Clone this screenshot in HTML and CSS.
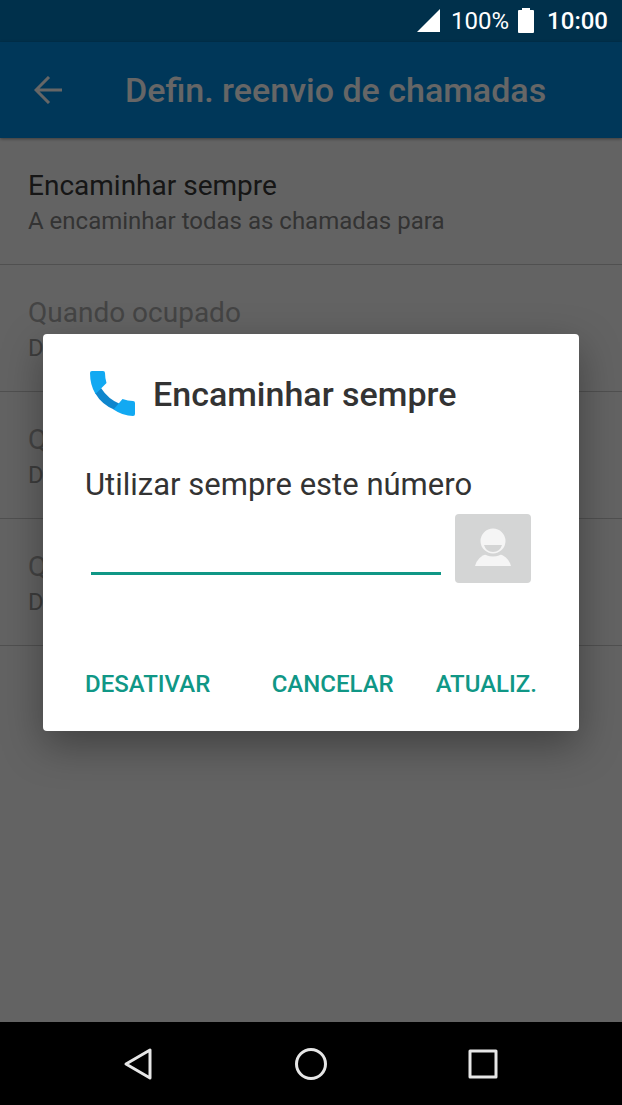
FILE: index.html
```html
<!DOCTYPE html>
<html lang="pt">
<head>
  <meta charset="UTF-8">
  <title>Defin. reenvio de chamadas</title>
  <meta name="viewport" content="width=device-width, initial-scale=1.0">
  <link rel="stylesheet" href="styles.css">
</head>
<body>

  <div class="status-bar">
    <svg width="24" height="24" viewBox="0 0 24 24" fill="#fff" aria-hidden="true">
      <path d="M0 23L23 0V23Z"/>
    </svg>
    <span class="battery-level">100%</span>
    <svg class="battery" width="18" height="26" viewBox="0 0 18 26" fill="#fff" aria-hidden="true">
      <path d="M5 0H13V2H16Q17 2 17 3V24Q17 25 16 25H2Q1 25 1 24V3Q1 2 2 2H5Z"/>
    </svg>
    <span class="clock">10:00</span>
  </div>

  <main class="screen">
    <header class="app-bar">
      <button type="button" class="back" aria-label="Voltar">
        <svg width="28" height="28" viewBox="0 0 28 28" fill="none" stroke="#fff" stroke-width="3" aria-hidden="true">
          <path d="M28 14H3M15 1L2 14L15 27"/>
        </svg>
      </button>
      <h1>Defin. reenvio de chamadas</h1>
    </header>

    <ul class="settings">
      <li class="setting">
        <h2>Encaminhar sempre</h2>
        <p>A encaminhar todas as chamadas para</p>
      </li>
      <li class="setting disabled">
        <h2>Quando ocupado</h2>
        <p>D</p>
      </li>
      <li class="setting disabled">
        <h2>Q</h2>
        <p>D</p>
      </li>
      <li class="setting disabled">
        <h2>Q</h2>
        <p>D</p>
      </li>
    </ul>

    <div class="overlay">
      <form class="dialog" role="dialog" aria-labelledby="dialogTitle">
        <div class="dialog-header">
          <svg width="46" height="46" viewBox="0 0 46 46" aria-hidden="true">
            <path fill="#0f86cd" d="M6 22L12 17Q19 28 31 33L26 39Q13 34 6 22Z"/>
            <path fill="#12a9f2" d="M3 0H14Q16 0 16 2Q16 7 17.500 12L6.500 23Q1 14 1 2Q1 0 3 0Z"/>
            <path fill="#12a9f2" d="M33.500 28Q39 30 44 30Q46 30 46 32V43Q46 45 44 45Q34 45 24.500 38.500Z"/>
          </svg>
          <h2 id="dialogTitle">Encaminhar sempre</h2>
        </div>

        <label for="number">Utilizar sempre este número</label>
        <div class="number-row">
          <input type="tel" id="number" name="number">
          <button type="button" class="contact" aria-label="Contactos">
            <svg width="36" height="40" viewBox="0 0 36 40" aria-hidden="true">
              <path fill="#f5f5f5" d="M0 38Q3 28 12 26H24Q33 28 36 38Z"/>
              <circle cx="18" cy="13" r="14" fill="#f5f5f5" stroke="#d4d5d5" stroke-width="3"/>
              <path fill="#d4d5d5" d="M9 17H27Q25 24 18 24Q11 24 9 17Z"/>
            </svg>
          </button>
        </div>

        <div class="actions">
          <button type="button" class="action first">Desativar</button>
          <button type="button" class="action">Cancelar</button>
          <button type="submit" class="action">Atualiz.</button>
        </div>
      </form>
    </div>
  </main>

  <nav class="nav-bar">
    <button type="button" aria-label="Anterior">
      <svg width="36" height="36" viewBox="0 0 36 36" aria-hidden="true"><path d="M5 18L29 4V32Z"/></svg>
    </button>
    <button type="button" aria-label="Início">
      <svg width="36" height="36" viewBox="0 0 36 36" aria-hidden="true"><circle cx="18" cy="18" r="14.500"/></svg>
    </button>
    <button type="button" aria-label="Recentes">
      <svg width="36" height="36" viewBox="0 0 36 36" aria-hidden="true"><rect x="5" y="5" width="26" height="26"/></svg>
    </button>
  </nav>

</body>
</html>
```
FILE: styles.css
```css
:root {
  --primary-color: #008ade;
  --status-color: #00304b;
  --accent-color: #109786;
}

* {
  box-sizing: border-box;
}

body {
  font-family: Roboto, sans-serif;
  background: #000;
  margin: 0;
  min-height: 100vh;
  display: flex;
  flex-direction: column;
}

h1, h2, p, ul {
  margin: 0;
  padding: 0;
}

button {
  font-family: inherit;
  background: none;
  border: none;
  padding: 0;
  cursor: pointer;
}

svg {
  display: block;
}

.status-bar {
  display: flex;
  align-items: center;
  justify-content: flex-end;
  height: 42px;
  padding: 0 14px;
  background: var(--status-color);
  color: #fff;
  font-size: 24px;
}

.battery-level {
  margin-left: 10px;
}

.battery {
  margin: 0 12px 0 8px;
}

.clock {
  font-weight: 500;
}

.screen {
  position: relative;
  flex: 1;
  background: #f8f8f8;
}

.app-bar {
  display: flex;
  align-items: center;
  height: 96px;
  padding: 0 34px;
  gap: 63px;
  background: var(--primary-color);
  box-shadow: 0 1px 3px rgba(0, 0, 0, 0.4);
  color: #fff;
}

.app-bar h1 {
  font-size: 34px;
  line-height: 44px;
  font-weight: 500;
}

.settings {
  list-style: none;
}

.setting {
  height: 127px;
  padding: 30px 28px;
  border-bottom: 1px solid #c8c8c8;
  color: #383838;
}

.setting h2 {
  font-size: 28px;
  line-height: 36px;
  font-weight: 400;
}

.setting p {
  font-size: 24px;
  line-height: 34px;
  color: #808080;
}

.setting.disabled {
  color: #aaa;
}

.setting.disabled p {
  color: #999;
}

.overlay {
  position: absolute;
  inset: 0;
  display: flex;
  align-items: center;
  justify-content: center;
  padding: 0 43px;
  background: rgba(0, 0, 0, 0.6);
}

.dialog {
  width: 100%;
  padding: 37px 42px 12px;
  background: #fff;
  border-radius: 4px;
  box-shadow: 0 14px 40px rgba(0, 0, 0, 0.35);
  color: #333;
}

.dialog-header {
  display: flex;
  align-items: center;
  gap: 18px;
  padding-left: 4px;
  margin-bottom: 48px;
}

.dialog-header h2 {
  font-size: 34px;
  line-height: 46px;
  font-weight: 500;
}

.dialog label {
  display: block;
  font-size: 31px;
  line-height: 40px;
}

.number-row {
  display: flex;
  align-items: flex-start;
  gap: 14px;
  padding: 9px 6px 0;
}

.number-row input {
  flex: 1;
  min-width: 0;
  height: 61px;
  padding: 0;
  border: none;
  border-bottom: 3px solid var(--accent-color);
  background: none;
  font-size: 31px;
  outline: none;
}

.contact {
  display: flex;
  align-items: center;
  justify-content: center;
  width: 76px;
  height: 69px;
  border-radius: 4px;
  background: #d4d5d5;
}

.actions {
  display: flex;
  gap: 42px;
  margin-top: 66px;
}

.action {
  height: 70px;
  font-size: 24px;
  font-weight: 500;
  text-transform: uppercase;
  color: var(--accent-color);
}

.action.first {
  margin-right: auto;
}

.nav-bar {
  display: grid;
  grid-template-columns: repeat(3, 1fr);
  height: 83px;
  padding: 0 53px;
  background: #000;
}

.nav-bar button {
  display: flex;
  align-items: center;
  justify-content: center;
}

.nav-bar svg {
  fill: none;
  stroke: #e6e6e6;
  stroke-width: 3;
  stroke-linejoin: round;
}
```
